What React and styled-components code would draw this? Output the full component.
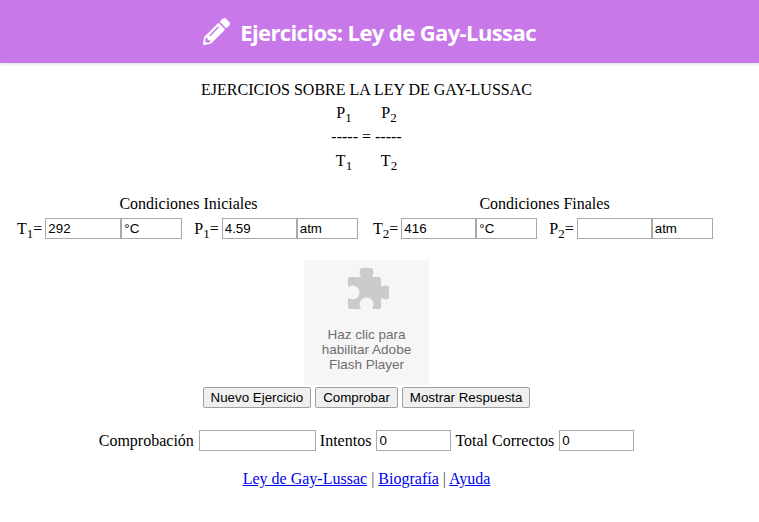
import React from 'react';
import styled, { createGlobalStyle } from 'styled-components';

const Global = createGlobalStyle`
  html, body { margin: 0; padding: 0; background: #fff; }
  body { font-family: "Liberation Serif", "Times New Roman", serif; font-size: 16px; color: #000; }
`;
const Header = styled.header`
  height: 63px; background: #c878e8; box-shadow: 0 1px 3px rgba(0,0,0,.15);
  display: flex; align-items: center; justify-content: center; gap: 10px; padding-right: 20px; box-sizing: border-box;
  color: #fff; font-family: "Open Sans", "Noto Sans", sans-serif; font-weight: 700; font-size: 22px; letter-spacing: -0.6px;
`;
const Title = styled.h1`margin: 0; font: inherit;`;
const Main = styled.main`
  width: 733px; display: flex; flex-direction: column; align-items: center; padding-top: 18px;
`;
const Line = styled.div`line-height: 18px; height: 18px;`;
const Formula = styled.div`
  display: grid; grid-template-columns: 23px 22px 23px; justify-content: center; justify-items: center;
  align-items: center; grid-auto-rows: 24px; margin-top: 2px; width: 72px;
`;
const Dashes = styled.div`grid-column: 1 / 4; white-space: pre;`;
const Sub = styled.sub`font-size: 13px; line-height: 0;`;
const Conditions = styled.div`display: flex; gap: 13px; margin-top: 22px;`;
const Group = styled.section`display: flex; flex-direction: column; align-items: center; width: 343px;`;
const GroupTitle = styled.div`line-height: 18px; height: 18px; margin-bottom: 5px;`;
const Fields = styled.div`display: flex; align-items: center; width: 100%;`;
const Field = styled.label`display: flex; align-items: center; margin-left: ${p => p.$gap || 0}px;`;
const Var = styled.span`margin-right: 3px; white-space: nowrap;`;
const Input = styled.input`
  box-sizing: border-box; width: ${p => p.$w}px; height: 21px; border: 1px solid #a9a9a9; padding: 1px 2px; margin: 0;
  font-family: "Liberation Sans", Arial, sans-serif; font-size: 13.33px; color: #000; background: #fff; border-radius: 0; outline: none;
`;
const Plugin = styled.div`
  width: 125px; height: 125px; margin-top: 21px; background: #f6f6f6; display: flex; flex-direction: column; align-items: center;
  color: #6e6e6e; font-family: "Liberation Sans", Arial, sans-serif; font-size: 14px; line-height: 15px; text-align: center; font-size: 13.5px;
`;
const PuzzleIcon = styled.svg`width: 44px; height: 44px; margin-top: 8px; margin-bottom: 15px; fill: #cbcbcb;`;
const Buttons = styled.div`display: flex; gap: 4px; margin-top: 2px;`;
const Button = styled.button`
  height: 21px; padding: 0 7px; margin: 0; background: #efefef; border: 1px solid #a0a0a0; border-radius: 2px; color: #000;
  font-family: "Liberation Sans", Arial, sans-serif; font-size: 13.33px; line-height: 1;
`;
const Check = styled.div`display: flex; align-items: center; margin-top: 22px;`;
const Caption = styled.span`margin: 0 ${p => p.$r ?? 5}px 0 ${p => p.$l ?? 0}px;`;
const Links = styled.nav`margin-top: 19px; line-height: 18px; color: #555;`;
const Link = styled.a`color: #0000ee; text-decoration: underline;`;

export default function App() {
  return (
    <>
      <Global />
      <Header>
        <svg width="27" height="27" viewBox="0 0 512 512" fill="#fff" aria-hidden="true">
          <path d="M497.9 142.1l-46.1 46.1c-4.7 4.7-12.3 4.7-17 0l-111-111c-4.7-4.7-4.7-12.3 0-17l46.1-46.1c18.7-18.7 49.1-18.7 67.9 0l60.1 60.1c18.8 18.7 18.8 49.1 0 67.9zM284.2 99.8L21.6 362.4.4 483.9c-2.9 16.4 11.4 30.6 27.8 27.8l121.5-21.3 262.6-262.6c4.7-4.7 4.7-12.3 0-17l-111-111c-4.8-4.7-12.4-4.7-17.1 0zM124.1 339.9c-5.5-5.5-5.5-14.3 0-19.8l154-154c5.5-5.5 14.3-5.5 19.8 0s5.5 14.3 0 19.8l-154 154c-5.5 5.5-14.3 5.5-19.8 0zM88 424h48v36.3l-64.5 11.3-31.1-31.1L51.7 376H88v48z" />
        </svg>
        <Title>Ejercicios: Ley de Gay-Lussac</Title>
      </Header>
      <Main>
        <Line>EJERCICIOS SOBRE LA LEY DE GAY-LUSSAC</Line>
        <Formula>
          <span>P<Sub>1</Sub></span><span />
          <span>P<Sub>2</Sub></span>
          <Dashes>----- = -----</Dashes>
          <span>T<Sub>1</Sub></span><span />
          <span>T<Sub>2</Sub></span>
        </Formula>
        <Conditions>
          <Group>
            <GroupTitle>Condiciones Iniciales</GroupTitle>
            <Fields>
              <Field><Var>T<Sub>1</Sub>=</Var><Input $w={76} defaultValue="292" /><Input $w={61} defaultValue="°C" /></Field>
              <Field $gap={12}><Var>P<Sub>1</Sub>=</Var><Input $w={75} defaultValue="4.59" /><Input $w={61} defaultValue="atm" /></Field>
            </Fields>
          </Group>
          <Group>
            <GroupTitle>Condiciones Finales</GroupTitle>
            <Fields>
              <Field><Var>T<Sub>2</Sub>=</Var><Input $w={75} defaultValue="416" /><Input $w={61} defaultValue="°C" /></Field>
              <Field $gap={12}><Var>P<Sub>2</Sub>=</Var><Input $w={75} defaultValue="" /><Input $w={61} defaultValue="atm" /></Field>
            </Fields>
          </Group>
        </Conditions>
        <Plugin>
          <PuzzleIcon viewBox="0 0 44 44" aria-hidden="true">
            <path d="M3 10a2 2 0 0 1 2-2h9.5c1 0 1.4-.8 1-1.6C14.800 5.200 14.500 4.200 14.500 3.500a7 7 0 0 1 14 0c0 .7-.3 1.700-1 2.900-.4.800 0 1.600 1 1.600H34a2 2 0 0 1 2 2v6.500c0 1 .8 1.400 1.600 1 1.200-.7 2.200-1 2.900-1a7 7 0 0 1 0 14c-.7 0-1.700-.3-2.900-1-.8-.4-1.600 0-1.600 1V38a2 2 0 0 1-2 2h-5.500c-1 0-1.400-.8-1-1.600.7-1.200 1-2.200 1-2.900a7 7 0 0 0-14 0c0 .7.300 1.700 1 2.900.4.800 0 1.600-1 1.600H5a2 2 0 0 1-2-2v-7.500c0-1 .8-1.400 1.600-1 1.200.7 2.200 1 2.900 1a7 7 0 0 0 0-14c-.7 0-1.700.3-2.900 1-.8.4-1.600 0-1.600-1z" transform="translate(0 1)" />
          </PuzzleIcon>
          <span>Haz clic para<br />habilitar Adobe<br />Flash Player</span>
        </Plugin>
        <Buttons>
          <Button>Nuevo Ejercicio</Button>
          <Button>Comprobar</Button>
          <Button>Mostrar Respuesta</Button>
        </Buttons>
        <Check>
          <Caption>Comprobación</Caption>
          <Input $w={117} defaultValue="" />
          <Caption $l={4}>Intentos</Caption>
          <Input $w={75} defaultValue="0" />
          <Caption $l={4}>Total Correctos</Caption>
          <Input $w={75} defaultValue="0" />
        </Check>
        <Links>
          <Link href="#">Ley de Gay-Lussac</Link> | <Link href="#">Biografía</Link> | <Link href="#">Ayuda</Link>
        </Links>
      </Main>
    </>
  );
}
